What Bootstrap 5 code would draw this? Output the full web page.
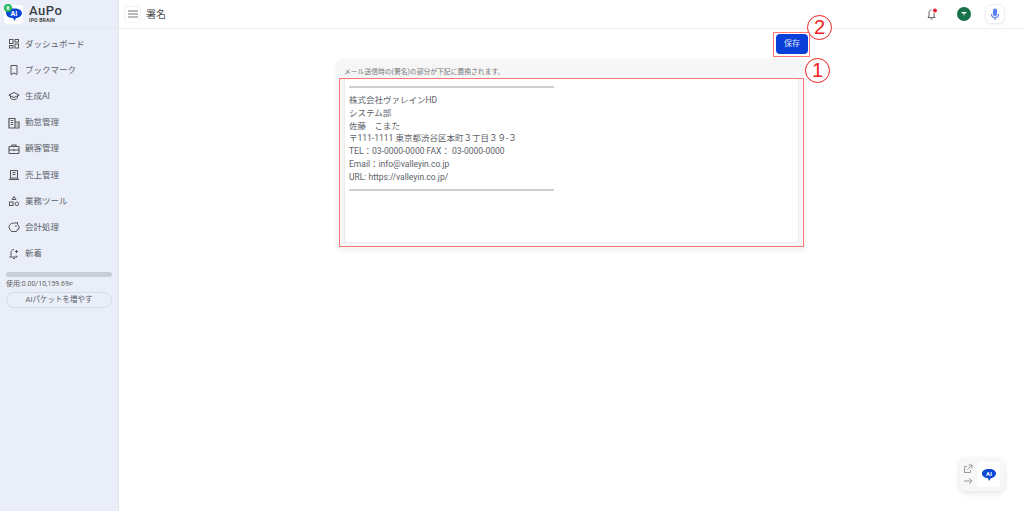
<!DOCTYPE html>
<html lang="ja">
<head>
  <meta charset="UTF-8">
  <title>署名</title>
  <meta name="viewport" content="width=device-width, initial-scale=1">
  <link href="https://cdn.jsdelivr.net/npm/bootstrap@5.3.3/dist/css/bootstrap.min.css" rel="stylesheet">
  <style>
    html, body { height: 100%; overflow: hidden; }
    body {
      font-family: Roboto, "Noto Sans CJK JP", sans-serif;
      font-size: 8.5px;
      color: #5c6168;
      background-color: #fff;
    }
    .app-shell { height: 511px; }

    /* sidebar */
    .side-bar {
      width: 119px;
      background-color: #e9eef8;
      border-right: 1px solid #dfe3ea;
    }
    .brand-row { height: 29px; padding: 4px 0 0 4px; border-bottom: 1px solid #e3e7ee; gap: 5px; }
    .brand-name { font-size: 13px; line-height: 12px; margin-top: 1px; font-weight: 500; color: #3a3f46; letter-spacing: .5px; }
    .brand-sub { font-size: 5px; line-height: 7px; font-weight: 700; color: #444; letter-spacing: .2px; }
    .menu-list { padding-top: 2px; }
    .menu-item { height: 26.2px; padding-left: 8px; gap: 5px; color: #5c6168; text-decoration: none; }
    .menu-item svg { width: 12px; height: 12px; flex: none; }
    .usage-box { padding: 5px 6px 0; }
    .usage-track { height: 5px; border-radius: 3px; background-color: #c9ced6; }
    .usage-text { font-size: 7px; line-height: 9px; margin-top: 2px; color: #666; }
    .usage-btn {
      display: block; width: 100%; margin-top: 3px; padding: 0; height: 16px;
      font-size: 7.5px; line-height: 14px; color: #5c6168;
      background: transparent; border: 1px solid #d5dae3; border-radius: 8px;
    }

    /* top bar */
    .top-bar { height: 29px; border-bottom: 1px solid #eee; padding: 0 19px 0 5px; }
    .menu-btn { width: 17px; height: 17px; border-radius: 4px; border: 1px solid #f2f3f5; }
    .page-title { font-size: 10px; color: #4a4a4a; margin-left: 5px; }
    .mic-btn { width: 20px; height: 20px; border-radius: 6px; border: 1px solid #eceef2; box-shadow: 0 1px 2px rgba(0,0,0,.06); }
    .user-dot { width: 14px; height: 14px; border-radius: 50%; background-color: #17724a; margin: 0 14px 0 19px; }

    /* content */
    .sign-column { width: 471px; }
    .save-row { padding-top: 5px; height: 30px; margin-right: -1px; }
    .save-btn {
      width: 32px; height: 20px; padding: 0; font-size: 8px; line-height: 20px;
      background-color: #0a3fd9; border: 0; border-radius: 4px; color: #dfe6fa;
    }
    .sign-card {
      background-color: #f6f6f6; border-radius: 6px; padding: 7px 8px 8px;
      box-shadow: 0 1px 3px rgba(0,0,0,.05);
    }
    .sign-note { font-size: 6.8px; line-height: 12px; color: #777; }
    .sign-body {
      height: 165px; background-color: #fff; border-radius: 2px; padding: 4px 0 0 4px;
      border: 1px solid #ebebeb; line-height: 12.8px; color: #5c6168;
    }
    .sign-rule { width: 205px; height: 2px; background-color: #d0d0d0; margin: 3px 0 0; }
    .sign-lines { padding: 6px 0 2px; white-space: pre; }

    /* annotations over the screenshot */
    .mark-box { position: absolute; border: 1px solid #f77; pointer-events: none; }
    .mark-body { left: 339px; top: 78px; width: 465px; height: 169px; }
    .mark-save { left: 773px; top: 32px; width: 37px; height: 25px; }
    .mark-num {
      position: absolute; width: 25px; height: 25px; border: 1px solid #e22; border-radius: 50%;
      background-color: #fff; color: #e22; font-size: 20px; line-height: 23px; text-align: center;
      font-family: "Liberation Sans", sans-serif;
    }
    .mark-one { left: 805px; top: 58px; }
    .mark-two { left: 807px; top: 15px; }

    /* floating helper */
    .float-box {
      position: absolute; left: 960px; top: 458px; width: 44px; height: 33px; padding: 3px;
      background-color: #f7f7f7; border-radius: 6px; box-shadow: 0 2px 6px rgba(0,0,0,.12);
    }
    .float-ai { width: 23px; height: 25px; background-color: #fff; border-radius: 4px; }
    .float-links { gap: 2px; }
  </style>
</head>
<body>

<div class="app-shell d-flex position-relative">

  <!-- Sidebar -->
  <aside class="side-bar d-flex flex-column flex-shrink-0">
    <div class="brand-row d-flex align-items-start">
      <svg width="20" height="20" viewBox="0 0 20 20">
        <rect y="1" width="19" height="19" rx="4" fill="#fff"/>
        <path d="M10 4.500c5 0 8 1.800 8 4.500s-3 5-6 5l-1.500 3-1.500-3c-4 0-7-2-7-5s3-4.500 8-4.500z" fill="#0a47d6"/>
        <text x="10" y="12" font-size="7" font-weight="700" text-anchor="middle" fill="#fff" font-family="Roboto">AI</text>
        <circle cx="4" cy="4" r="4" fill="#22b45a"/>
        <rect x="2.500" y="2" width="3" height="4" rx=".5" fill="#bfeccd"/>
      </svg>
      <div>
        <div class="brand-name">AuPo</div>
        <div class="brand-sub">IPO BRAIN</div>
      </div>
    </div>

    <nav class="menu-list d-flex flex-column">
      <a class="menu-item d-flex align-items-center" href="#">
        <svg viewBox="0 0 12 12" fill="none" stroke="#555" stroke-width="1"><rect x="1.500" y="1.500" width="3.500" height="4"/><rect x="7" y="1.500" width="3.500" height="2.500"/><rect x="1.500" y="7.500" width="3.500" height="2.500"/><rect x="7" y="6" width="3.500" height="4"/></svg>
        <span>ダッシュボード</span>
      </a>
      <a class="menu-item d-flex align-items-center" href="#">
        <svg viewBox="0 0 12 12" fill="none" stroke="#555" stroke-width="1"><path d="M3 1.500h6v9l-3-1.500-3 1.500z"/></svg>
        <span>ブックマーク</span>
      </a>
      <a class="menu-item d-flex align-items-center" href="#">
        <svg viewBox="0 0 12 12" fill="none" stroke="#555" stroke-width="1"><path d="M.8 5 6 2.500 11.200 5 6 7.500z"/><path d="M2.500 6v2c1.500 2 5.500 2 7 0V6"/></svg>
        <span>生成AI</span>
      </a>
      <a class="menu-item d-flex align-items-center" href="#">
        <svg viewBox="0 0 12 12" fill="none" stroke="#555" stroke-width="1.200"><path d="M1 11V1.500h6V11M7 5h4v6M.5 11h11"/><path d="M2.800 3.500h2.400M2.800 5.500h2.400M2.800 7.500h2.400M8.500 7h1.200M8.500 9h1.200"/></svg>
        <span>勤怠管理</span>
      </a>
      <a class="menu-item d-flex align-items-center" href="#">
        <svg viewBox="0 0 12 12" fill="none" stroke="#555" stroke-width="1.100"><rect x="1" y="3.500" width="10" height="7" rx=".8"/><path d="M4 3.500V2h4v1.500M1 7h10M6 6v2"/></svg>
        <span>顧客管理</span>
      </a>
      <a class="menu-item d-flex align-items-center" href="#">
        <svg viewBox="0 0 12 12" fill="none" stroke="#555" stroke-width="1"><path d="M2.500 9V1.500h7V9M1.200 10.500h9.600l-1.300-1.500h-7z"/><path d="M4.500 3.500h3M4.500 5.500h3"/></svg>
        <span>売上管理</span>
      </a>
      <a class="menu-item d-flex align-items-center" href="#">
        <svg viewBox="0 0 12 12" fill="none" stroke="#555" stroke-width="1"><path d="M6 1.500 8 4.500H4z"/><rect x="1.500" y="7" width="3.500" height="3.500"/><circle cx="8.800" cy="8.800" r="1.800"/></svg>
        <span>業務ツール</span>
      </a>
      <a class="menu-item d-flex align-items-center" href="#">
        <svg viewBox="0 0 12 12" fill="none" stroke="#555" stroke-width="1"><path d="M9.500 1.500v2l1.500 1.500v3H9.800L8.500 10.500h-5L2 8.500 1 6c0-2 2-4 4.500-4H8z"/><circle cx="8" cy="5" r=".4"/></svg>
        <span>会計処理</span>
      </a>
      <a class="menu-item d-flex align-items-center" href="#">
        <svg viewBox="0 0 12 12" fill="none" stroke="#555" stroke-width="1"><path d="M6 1.500C4 1.500 3 3 3 5v2.500L1.800 9h7.400L8 7.500M5 10.500h2M8.500 2v3M7 3.500h3"/></svg>
        <span>新着</span>
      </a>
    </nav>

    <div class="usage-box">
      <div class="usage-track"></div>
      <div class="usage-text">使用:0.00/10,159.69<small>P</small></div>
      <button class="usage-btn" type="button">AIパケットを増やす</button>
    </div>
  </aside>

  <!-- Main -->
  <main class="flex-grow-1 d-flex flex-column">
    <header class="top-bar d-flex align-items-center">
      <span class="menu-btn d-flex align-items-center justify-content-center">
        <svg width="10" height="8" viewBox="0 0 10 8" stroke="#777" stroke-width="1"><path d="M0 1h10M0 4h10M0 7h10"/></svg>
      </span>
      <span class="page-title">署名</span>
      <div class="ms-auto d-flex align-items-center">
        <svg width="12" height="13" viewBox="0 0 12 13" fill="none" stroke="#666" stroke-width="1"><path d="M5.500 2C3.800 2 3 3.300 3 5v3L2 9.500h7L8 8V5M4.500 11h2"/><circle cx="9" cy="2.500" r="2" fill="#e8202a" stroke="none"/></svg>
        <span class="user-dot d-flex align-items-center justify-content-center">
          <svg width="6" height="5" viewBox="0 0 6 5" fill="#fff"><path d="M0 0h6L4.500 1.500H3.500L3 5 2.500 1.500H1.500z"/></svg>
        </span>
        <span class="mic-btn d-flex align-items-center justify-content-center">
          <svg width="10" height="13" viewBox="0 0 10 13" fill="none" stroke="#5b7ff0" stroke-width="1.200"><rect x="3.500" y="1" width="3" height="6.500" rx="1.500" fill="#5b7ff0"/><path d="M1.500 6c0 2 1.500 3.500 3.500 3.500S8.500 8 8.500 6M5 9.500V12"/></svg>
        </span>
      </div>
    </header>

    <section class="sign-column mx-auto">
      <div class="save-row d-flex justify-content-end">
        <button class="save-btn" type="button">保存</button>
      </div>
      <div class="sign-card">
        <div class="sign-note">メール送信時の(署名)の部分が下記に置換されます。</div>
        <div class="sign-body">
          <div class="sign-rule"></div>
          <div class="sign-lines">株式会社ヴァレインHD
システム部
佐藤　こまた
〒111-1111 東京都渋谷区本町３丁目３９-３
TEL：03-0000-0000 FAX： 03-0000-0000
Email：info@valleyin.co.jp
URL: https://valleyin.co.jp/</div>
          <div class="sign-rule"></div>
        </div>
      </div>
    </section>
  </main>

  <!-- Annotations -->
  <div class="mark-box mark-body"></div>
  <div class="mark-box mark-save"></div>
  <div class="mark-num mark-one">1</div>
  <div class="mark-num mark-two">2</div>

  <!-- Floating helper -->
  <div class="float-box d-flex align-items-center gap-1">
    <div class="float-links d-flex flex-column">
      <svg width="10" height="10" viewBox="0 0 10 10" fill="none" stroke="#999" stroke-width="1"><path d="M7.500 6v2.500h-6v-6H4M5.500 1h3.500v3.500M9 1 4.500 5.500"/></svg>
      <svg width="10" height="10" viewBox="0 0 10 10" fill="none" stroke="#999" stroke-width="1"><path d="M1 5h8M6 2l3 3-3 3"/></svg>
    </div>
    <div class="float-ai d-flex align-items-center justify-content-center">
      <svg width="16" height="14" viewBox="0 0 16 14">
        <path d="M8 1c4.500 0 7 2 7 4.500S12 10 10 10l-2 3-1-3C3.500 10 1 8 1 5.500S3.500 1 8 1z" fill="#0a47d6"/>
        <text x="8" y="8" font-size="6" font-weight="700" text-anchor="middle" fill="#fff" font-family="Roboto">AI</text>
      </svg>
    </div>
  </div>
</div>

<script src="https://cdn.jsdelivr.net/npm/bootstrap@5.3.3/dist/js/bootstrap.bundle.min.js"></script>
</body>
</html>
